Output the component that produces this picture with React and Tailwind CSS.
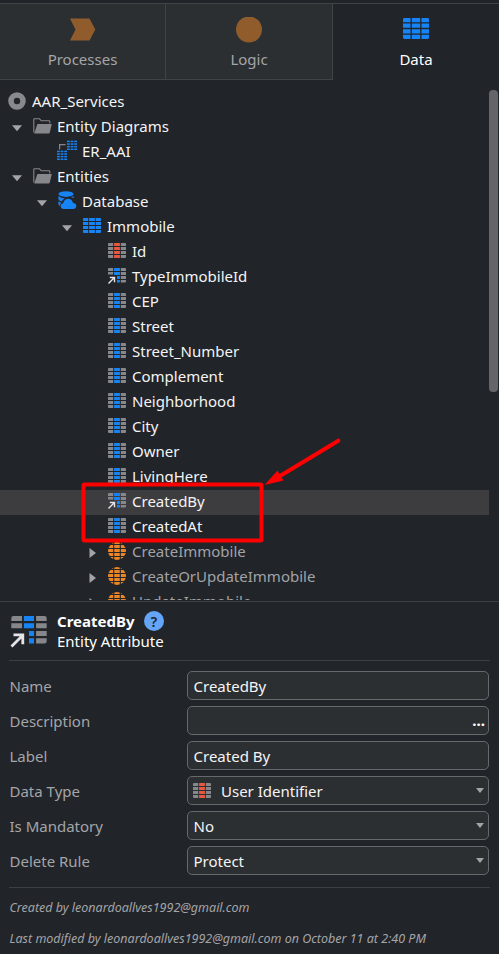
import React from 'react'

const GRAY = '#85878b'
const BLUE = '#1784f5'
const RED = '#e8573f'

// Three-column table glyph on an 18 x 15 grid
function Grid({ mid = BLUE, side = GRAY, className = 'w-[18px] h-[15px]' }) {
  return (
    <svg viewBox="0 0 18 15" preserveAspectRatio="none" className={className}>
      <path d="M1 0H5.200V3H0V1Q0 0 1 0ZM0 4H5.200V7H0ZM0 8H5.200V11H0ZM0 12H5.200V15H1Q0 15 0 14Z" fill={side} />
      <path d="M6.100 0H11.900V3H6.100ZM6.100 4H11.900V7H6.100ZM6.100 8H11.900V11H6.100ZM6.100 12H11.900V15H6.100Z" fill={mid} />
      <path d="M12.800 0H17Q18 0 18 1V3H12.800ZM12.800 4H18V7H12.800ZM12.800 8H18V11H12.800ZM12.800 12H18V14Q18 15 17 15H12.800Z" fill={side} />
    </svg>
  )
}

function LinkGrid() {
  return (
    <svg viewBox="0 0 18 16" className="h-[16px] w-[18px]">
      <path d="M1 0H5.200V3H0V1Q0 0 1 0ZM0 4H5.200V6.500H0ZM12.800 0H17Q18 0 18 1V3H12.800ZM12.800 4H18V7H12.800ZM12.800 8H18V11H12.800ZM12.800 12H18V13.500Q18 14.500 17 14.500H12.800Z" fill={GRAY} />
      <path d="M6.100 0H11.900V3H6.100ZM6.100 4H11.900V7H6.100ZM9 8H11.900V11H9ZM9 12H11.900V14.500H9Z" fill={BLUE} />
      <path d="M.5 15.500L6.200 9.800M1.800 9.500H6.500V14.300" fill="none" stroke="#e4e4e8" strokeWidth="1.400" />
    </svg>
  )
}

function Folder() {
  return (
    <svg viewBox="0 0 19 16" className="h-4 w-[19px]">
      <path d="M.8 14.5V1.5Q.8.8 1.5.8H6.5L8.3 2.8H16Q16.8 2.8 16.8 3.5V5.5" fill="none" stroke={GRAY} strokeWidth="1.1" />
      <path d="M4.4 6H18.8L16.8 14.5Q16.6 15.4 15.6 15.4H1.2Z" fill={GRAY} />
    </svg>
  )
}

function Diagram() {
  const cells = (x, y) =>
    [0, 1, 2, 3].flatMap((r) =>
      [0, 1, 2].map((c) => <rect key={`${x}${r}${c}`} x={x + c * 3.6} y={y + r * 2.6} width="2.8" height="1.5" fill={BLUE} />)
    )
  return (
    <svg viewBox="0 0 21 21" className="-ml-[1px] h-[21px] w-[21px]">
      {cells(10, 0.7)}
      {cells(0, 10.7)}
      <path d="M2.6 9.5V4.7H8.5" fill="none" stroke={GRAY} strokeWidth="1.2" />
    </svg>
  )
}

function DatabaseIcon() {
  return (
    <svg viewBox="0 0 19 19" className="h-[19px] w-[19px]">
      <g fill={BLUE}>
        <ellipse cx="8" cy="3.1" rx="7.6" ry="2.8" />
        <path d="M.4 5Q3 7.4 7 7.3Q4.500 8.500 3.800 10.500Q.4 9.500 .4 8ZM15.600 5V7.200Q14 6.200 12 6.100Q14.500 5.800 15.600 5ZM.4 10.300Q2 11.700 3.400 11.800Q1.800 13 1.900 15Q.4 14 .4 13Z" />
        <path d="M5.500 18Q2.600 17.800 2.600 15.100Q2.700 12.600 5.200 12.200Q5.900 8.200 9.800 7.700Q14 7.600 14.900 11.700Q18.200 12.200 18.300 15Q18.200 17.900 15.200 18Z" />
      </g>
    </svg>
  )
}

function Action() {
  return (
    <svg viewBox="0 0 18 18" className="h-[18px] w-[18px]">
      <circle cx="9" cy="9" r="9" fill="#ea8626" />
      <path d="M0 2.500H18M0 6.500H18M0 10.500H18M0 14.500H18M5.700 0V18M12.300 0V18" stroke="#212429" strokeWidth="1.1" />
    </svg>
  )
}

function Service() {
  return (
    <svg viewBox="0 0 18 18" className="h-[18px] w-[18px]">
      <circle cx="9" cy="9" r="6" fill="none" stroke="#88898d" strokeWidth="5.600" />
    </svg>
  )
}

function Caret({ open }) {
  return (
    <svg viewBox="0 0 10 10" className="h-[10px] w-[10px]">
      <path d={open ? 'M0 2.300H10L5 8.300Z' : 'M2.500 0L9 5L2.500 10Z'} fill="#a3a4a7" />
    </svg>
  )
}

const attr = (label) => ({ label, icon: <Grid />, pad: 'pl-[83px]' })
const link = (label, selected) => ({ label, icon: <LinkGrid />, pad: 'pl-[83px]', selected })
const rows = [
  { label: 'AAR_Services', icon: <Service />, pad: 'pl-[8px]', root: true },
  { label: 'Entity Diagrams', icon: <Folder />, pad: 'pl-[8px]', open: true },
  { label: 'ER_AAI', icon: <Diagram />, pad: 'pl-[33px]' },
  { label: 'Entities', icon: <Folder />, pad: 'pl-[8px]', open: true },
  { label: 'Database', icon: <DatabaseIcon />, pad: 'pl-[33px]', open: true },
  { label: 'Immobile', icon: <Grid side={BLUE} />, pad: 'pl-[58px]', open: true },
  { label: 'Id', icon: <Grid mid={RED} />, pad: 'pl-[83px]' },
  link('TypeImmobileId'),
  attr('CEP'),
  attr('Street'),
  attr('Street_Number'),
  attr('Complement'),
  attr('Neighborhood'),
  attr('City'),
  attr('Owner'),
  attr('LivingHere'),
  link('CreatedBy', true),
  attr('CreatedAt'),
  { label: 'CreateImmobile', icon: <Action />, pad: 'pl-[83px]', open: false, dim: true },
  { label: 'CreateOrUpdateImmobile', icon: <Action />, pad: 'pl-[83px]', open: false, dim: true },
  { label: 'UpdateImmobile', icon: <Action />, pad: 'pl-[83px]', open: false, dim: true },
]

function Row({ row }) {
  return (
    <div className={`flex h-[25px] shrink-0 ${row.pad} ${row.selected ? 'bg-[#3d3d40]' : ''}`}>
      {!row.root && (
        <span className="flex w-[25px] items-center pl-[4px] pt-[1px]">
          {row.open !== undefined && <Caret open={row.open} />}
        </span>
      )}
      <span className="flex h-[21px] w-[24px] shrink-0 items-center">{row.icon}</span>
      <span className={`whitespace-nowrap leading-[23px] ${row.dim ? 'text-[#a2a3a6]' : 'text-[#f4f4f5]'}`}>{row.label}</span>
    </div>
  )
}

function Tab({ label, active, width, children }) {
  return (
    <div className={`flex flex-col items-center border-b ${width} ${active ? 'border-transparent text-white' : 'border-r border-[#414447] bg-[#2c2f32] text-[#a4a5a8]'}`}>
      <div className="mt-[12px] flex h-[27px] items-center">{children}</div>
      <span className="mt-[5px] leading-[22px]">{label}</span>
    </div>
  )
}

function Field({ label, value, icon, select, more }) {
  return (
    <div className="flex h-[29px]">
      <span className="-ml-[0.5px] w-[177.5px] leading-[31px] text-[#a4a5a8]">{label}</span>
      <div className="flex flex-1 items-center rounded-[5px] border border-[#66696c] bg-[#2c2f32] pl-[5px] pr-[4px]">
        {icon && <span className="mb-px mr-[9.5px] flex">{icon}</span>}
        <span className="flex-1 pl-[0.5px] pt-[2px] leading-[27px] text-[#f4f4f5]">{value}</span>
        {more && <span className="-mr-px font-bold leading-[27px] text-white">...</span>}
        {select && (
          <svg viewBox="0 0 8 5" className="h-[5px] w-[8px]">
            <path d="M0 0H8L4 5Z" fill="#a3a4a7" />
          </svg>
        )}
      </div>
    </div>
  )
}

export default function App() {
  return (
    <main className="relative flex h-[954px] w-[499px] flex-col overflow-hidden bg-[#212429] font-['Noto_Sans',sans-serif] text-[15px]">
      <header className="mt-[3px] flex h-[77px] border-t border-[#414447]">
        <Tab label="Processes" width="w-[166px]">
          <svg viewBox="0 0 26 24" className="h-6 w-[26px]">
            <path d="M0 .5H19.500L25.300 11.500L19.500 22.500H0L5.500 11.500Z" fill="#905c2c" />
          </svg>
        </Tab>
        <Tab label="Logic" width="w-[167px]">
          <svg viewBox="0 0 26 26" className="h-[26px] w-[26px]">
            <circle cx="13" cy="12.5" r="13" fill="#905c2c" />
          </svg>
        </Tab>
        <Tab label="Data" width="w-[166px]" active>
          <Grid side={BLUE} className="mb-[3px] h-[21px] w-[26px]" />
        </Tab>
      </header>

      <section className="mt-[10px] flex h-[510px] overflow-hidden">
        <div className="flex w-[489px] flex-col">
          {rows.map((row) => (
            <Row key={row.label} row={row} />
          ))}
        </div>
        <div className="h-[302px] w-[9px] rounded-[4px] bg-[#636568]" />
      </section>

      <section className="mt-[1px] flex flex-1 flex-col border-t border-[#3d4043] px-[9px]">
        <div className="flex h-[59px] border-b border-[#3d4043]">
          <svg viewBox="0 0 38 34" className="ml-[1px] mt-[13px] h-[34px] w-[38px]">
            <path d="M3.500 1H12V6H1.300V3.200Q1.300 1 3.500 1ZM1.300 8.300H12V13.300H1.300ZM26.100 1H34.500Q36.700 1 36.700 3.200V6H26.100ZM26.100 8.300H36.700V13.300H26.100ZM26.100 16H36.700V21H26.100ZM26.100 23.300H36.700V26.300Q36.700 28.600 34.500 28.600H26.100Z" fill={GRAY} />
            <path d="M13.900 1H24V6H13.900ZM13.900 8.300H24V13.300H13.900ZM19 16H24V21H19ZM19 23.300H24V28.600H19Z" fill={BLUE} />
            <path d="M1.500 31.500L12.500 20.500M3.500 19.900H12.800V29.300" fill="none" stroke="#e4e4e8" strokeWidth="2.800" />
          </svg>
          <div className="ml-[9px] flex flex-col pt-[9px] text-white">
            <div className="flex h-[20px] items-center">
              <span className="w-[87px] text-[15px] font-bold leading-[20px]">CreatedBy</span>
              <span className="flex h-5 w-5 items-center justify-center rounded-full bg-[#64a5f7] text-[14px] font-semibold text-[#212429]">?</span>
            </div>
            <span className="text-[15px] leading-[20px]">Entity Attribute</span>
          </div>
        </div>
        <div className="mx-px mt-[10px] flex flex-col gap-[6px]">
          <Field label="Name" value="CreatedBy" />
          <Field label="Description" more />
          <Field label="Label" value="Created By" />
          <Field label="Data Type" value="User Identifier" icon={<Grid mid={RED} />} select />
          <Field label="Is Mandatory" value="No" select />
          <Field label="Delete Rule" value="Protect" select />
        </div>
        <footer className="mt-[12px] border-t border-[#3d4043] pl-[0.5px] pt-[9px] text-[12.500px] italic leading-[21px] text-[#a4a5a8]">
          <p>Created by leonardoallves1992@gmail.com</p>
          <p className="mt-[10px]">Last modified by leonardoallves1992@gmail.com on October 11 at 2:40 PM</p>
        </footer>
      </section>

      <svg viewBox="0 0 270 115" overflow="visible" className="absolute left-[80px] top-[435px] h-[115px] w-[270px]">
        <rect x="3.500" y="49.500" width="178" height="56" rx="1" fill="none" stroke="#fe0000" strokeWidth="4" />
        <path d="M258.300 5.700L200 41" stroke="#fe0000" strokeWidth="4" strokeLinecap="round" />
        <path d="M184.500 50L197.500 35.500L200 40L203.500 45.500Z" fill="#fe0000" />
      </svg>
    </main>
  )
}
